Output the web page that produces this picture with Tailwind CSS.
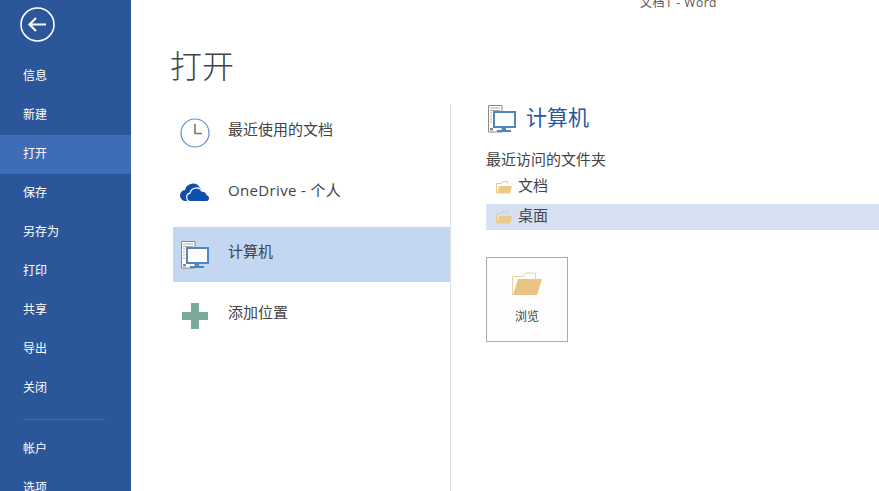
<!DOCTYPE html>
<html lang="zh-CN">
<head>
    <meta charset="UTF-8">
    <title>文档1 - Word</title>
    <script src="https://cdn.jsdelivr.net/npm/@tailwindcss/browser@4"></script>
</head>
<body class="bg-white overflow-hidden font-['Open_Sans','Noto_Sans_CJK_SC',sans-serif]">
<div class="flex w-[879px] h-[491px] overflow-hidden">
    <!-- backstage nav -->
    <nav class="w-[131px] shrink-0 bg-[#2b579a] text-white text-[12px] flex flex-col">
        <div class="h-[57px] pl-[20px] pt-[7px] shrink-0">
            <svg width="35" height="35" viewBox="0 0 35 35" fill="none" stroke="#fff">
                <circle cx="17.5" cy="17.5" r="16.5" stroke-width="1.6"/>
                <path d="M9.5 17.5H26M16 11l-6.5 6.5L16 24" stroke-width="2.2"/>
            </svg>
        </div>
        <a class="h-[39px] shrink-0 flex items-center pl-[23px] pb-[2px]">信息</a>
        <a class="h-[39px] shrink-0 flex items-center pl-[23px] pb-[2px]">新建</a>
        <a class="h-[39px] shrink-0 flex items-center pl-[23px] pb-[2px] bg-[#3e6db5]">打开</a>
        <a class="h-[39px] shrink-0 flex items-center pl-[23px] pb-[2px]">保存</a>
        <a class="h-[39px] shrink-0 flex items-center pl-[23px] pb-[2px]">另存为</a>
        <a class="h-[39px] shrink-0 flex items-center pl-[23px] pb-[2px]">打印</a>
        <a class="h-[39px] shrink-0 flex items-center pl-[23px] pb-[2px]">共享</a>
        <a class="h-[39px] shrink-0 flex items-center pl-[23px] pb-[2px]">导出</a>
        <a class="h-[39px] shrink-0 flex items-center pl-[23px] pb-[2px]">关闭</a>
        <div class="h-px shrink-0 w-[82px] ml-[23px] mt-[11px] mb-[10px] bg-[#3e6db5]"></div>
        <a class="h-[39px] shrink-0 flex items-center pl-[23px] pb-[2px]">帐户</a>
        <a class="h-[39px] shrink-0 flex items-center pl-[23px] pb-[2px]">选项</a>
    </nav>

    <div class="flex-1 min-w-0 flex flex-col">
        <div class="h-[6px] shrink-0 flex items-center pl-[509px] text-[12px] text-[#555] tracking-[0.55px] whitespace-nowrap">文档1 - Word</div>
        <h1 class="h-[98px] shrink-0 pl-[39px] pt-[35px] text-[32px] leading-[50px] text-[#444] font-light">打开</h1>

        <div class="flex flex-1 min-h-0">
            <!-- places -->
            <div class="w-[320px] shrink-0 pl-[42px] border-r border-[#e1e1e1] text-[15px] text-[#444] flex flex-col gap-[6px] pt-px">
                <div class="h-[55px] flex items-center">
                    <div class="w-[44px] mr-[11px] shrink-0 flex justify-center">
                        <svg width="30" height="30" viewBox="0 0 30 30" fill="none">
                            <circle cx="15" cy="15" r="14" stroke="#5b93c9" stroke-width="1.2"/>
                            <path d="M15 6v9.500h7" stroke="#777" stroke-width="1.600"/>
                        </svg>
                    </div>
                    <span class="pb-[6px]">最近使用的文档</span>
                </div>
                <div class="h-[55px] flex items-center">
                    <div class="w-[44px] mr-[11px] shrink-0 flex justify-center">
                        <svg class="mb-[3px]" width="31" height="20" viewBox="0 0 31 20" fill="#0f4fb0">
                            <path d="M6 19a5.500 5.500 0 0 1-1-11 8 8 0 0 1 15-2 6 6 0 0 1 3 5v8z"/>
                            <path d="M11 19.500a4.200 4.200 0 0 1-1-8.300 6.500 6.500 0 0 1 12-2 5 5 0 0 1 5 3.500 3.600 3.600 0 0 1 .5 6.800z" stroke="#fff" stroke-width="1.200"/>
                        </svg>
                    </div>
                    <span class="pb-[6px] tracking-[0.35px]">OneDrive - 个人</span>
                </div>
                <div class="h-[55px] flex items-center bg-[#c3d6f2]">
                    <div class="w-[44px] mr-[11px] shrink-0 flex justify-center">
                        <svg width="28" height="28" viewBox="0 0 28 28" fill="none">
                            <path d="M.500.500h13.500V27H.500z" fill="#fff" stroke="#8a8a8a"/>
                            <path d="M2 3h10M2 5.500h10M2 8h2M2 11h2M2 14h2M2 17h2" stroke="#aaa"/>
                            <rect x="2" y="23" width="3" height="2.500" fill="#888"/>
                            <rect x="6" y="7" width="21" height="15" fill="#fff" stroke="#4f86c0" stroke-width="2"/>
                            <path d="M14 23h4v2h-4zM9 25h14v2H9z" fill="#4f86c0"/>
                        </svg>
                    </div>
                    <span class="pb-[7px]">计算机</span>
                </div>
                <div class="h-[55px] flex items-center">
                    <div class="w-[44px] mr-[11px] shrink-0 flex justify-center">
                        <svg width="26" height="26" viewBox="0 0 26 26" fill="#7aab9a">
                            <path d="M9 0h8v9h9v8h-9v9H9v-9H0V9h9z"/>
                        </svg>
                    </div>
                    <span class="pb-[6px]">添加位置</span>
                </div>
            </div>

            <!-- folders -->
            <div class="flex-1 min-w-0 pl-[35px] text-[15px] text-[#444]">
                <div class="flex items-center h-[30px] pl-[2px] gap-[10px]">
                    <svg width="28" height="28" viewBox="0 0 28 28" fill="none">
                        <path d="M.500.500h13.500V27H.500z" fill="#fff" stroke="#8a8a8a"/>
                        <path d="M2 3h10M2 5.500h10M2 8h2M2 11h2M2 14h2M2 17h2" stroke="#aaa"/>
                        <rect x="2" y="23" width="3" height="2.500" fill="#888"/>
                        <rect x="6" y="7" width="21" height="15" fill="#fff" stroke="#4f86c0" stroke-width="2"/>
                        <path d="M14 23h4v2h-4zM9 25h14v2H9z" fill="#4f86c0"/>
                    </svg>
                    <span class="text-[21px] text-[#2b579a] pb-[2px]">计算机</span>
                </div>
                <div class="mt-[15px] h-[20px] leading-[20px]">最近访问的文件夹</div>
                <div class="mt-[5px] h-[26px] flex items-center pl-[10px] gap-[6px]">
                    <svg width="16" height="13" viewBox="0 0 16 13" fill="none">
                        <path d="M.500 12V2.500h5l1-2h5v3" stroke="#e8c98c"/>
                        <path d="M3 5h13l-2 7.500H1z" fill="#ecca8c"/>
                    </svg>
                    <span class="pb-[4px]">文档</span>
                </div>
                <div class="mt-[4px] h-[26px] flex items-center pl-[10px] gap-[6px] bg-[#d5e1f2]">
                    <svg width="16" height="13" viewBox="0 0 16 13" fill="none">
                        <path d="M.500 12V2.500h5l1-2h5v3" stroke="#e8c98c"/>
                        <path d="M3 5h13l-2 7.500H1z" fill="#ecca8c"/>
                    </svg>
                    <span class="pb-[4px]">桌面</span>
                </div>
                <button class="mt-[27px] w-[82px] h-[85px] border border-[#ababab] bg-[#fdfdfd] flex flex-col items-center text-[12px] text-[#444]">
                    <svg class="mt-[14px]" width="30" height="24" viewBox="0 0 30 24" fill="none">
                        <path d="M.500 23V4.500h11l2-3.500h10v6" stroke="#ecd5a6"/>
                        <path d="M6 7h24l-5 16H1z" fill="#e9c482"/>
                    </svg>
                    <span class="mt-[12px]">浏览</span>
                </button>
            </div>
        </div>
    </div>
</div>
</body>
</html>
